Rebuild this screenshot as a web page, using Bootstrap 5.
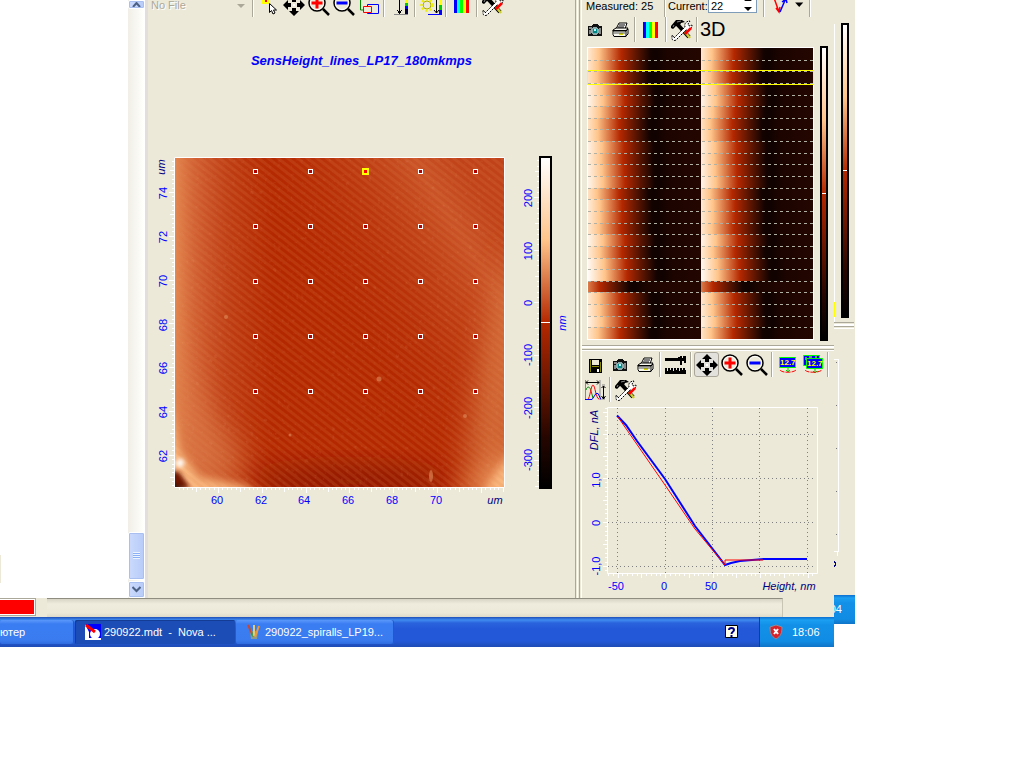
<!DOCTYPE html>
<html lang="en">
<head>
<meta charset="utf-8">
<meta name="viewport" content="width=device-width, initial-scale=1">
<title>Nova - 290922.mdt</title>
<link href="https://cdn.jsdelivr.net/npm/bootstrap@5.3.0/dist/css/bootstrap.min.css" rel="stylesheet">
<style>
:root{--face:#ece9d8;--edge:#aca899}
body{font-family:"Liberation Sans",Arial,sans-serif;font-size:11px;line-height:14px;background:#fff;color:#000}
.desktop{padding-right:169px}
.face{background:var(--face)}
.peek{width:21px}
.blank-pane{width:128px;background:#fff}
.blank-pane i{width:1px;height:28px;margin-bottom:15px;background:var(--face)}
.vscroll{width:20px;background:linear-gradient(90deg,#f0eee6,#fefefb 15px,#fff 17px,#e2dedb 17px)}
.vscroll button{width:17px;border:1px solid #fff;border-radius:2px;background:linear-gradient(90deg,#cbdafd,#b7cbf9);box-shadow:inset 0 0 0 1px #a9bff0;padding:0}
.up-btn{height:9px}.down-btn{height:17px}.thumb{height:48px;margin-bottom:1px}
.toolbar{height:25px}
.toolbar-cut{height:17px;overflow:hidden;align-items:flex-end}
.tool{width:25px;height:25px;flex:none;border:0;padding:0;background:none;line-height:0}
.tool svg{width:24px;height:24px}
.tool.on{border:1px solid #aaa69a;border-radius:3px;background:#e2e1dc}
.tool-3d{font-size:20px;line-height:25px;font-family:"Liberation Sans",Arial,sans-serif}
.rule{width:6px;height:25px;flex:none;background:linear-gradient(var(--edge),var(--edge)) 2px 0/1px 100% no-repeat,linear-gradient(#fff,#fff) 3px 0/1px 100% no-repeat}
.files{width:98px;border:0;background:none;color:#aca899;text-shadow:1px 1px #fff;appearance:none;padding:0 3px;height:24px;font-size:11px;opacity:1}
.files-wrap svg{right:1px;bottom:8px}
.plot-title{font-size:13px;line-height:16px;font-weight:700;font-style:italic;color:#00f;padding-top:36px;margin-bottom:81px}
.vsplit{width:7px;background:linear-gradient(90deg,#aca899 1px,#ece9d8 1px 2px,#fff 2px 3px,#ece9d8 3px 4px,#aca899 4px 5px,#ece9d8 5px 6px,#fff 6px)}
.hsplit{height:7px;background:linear-gradient(#aca899 1px,#fff 1px 3px,#ece9d8 3px 4px,#aca899 4px 5px,#fff 5px 6px,#ece9d8 6px)}
.right-pane{width:252px}
.count-box{width:49px;height:24px;border:1px solid #7f9db9;background:#fff}
.count-box input{width:32px;border:0;padding:0 2px;font-size:11px;background:none;height:12px}
.read{height:18px;line-height:14px}
.read-count{width:80px}
.read-current{width:40px}
.status{height:19px}
.status .alarm{width:36px;height:18px;background:#f00;border:1px solid #aca899;border-left:0;box-shadow:inset 0 -1px #fff,inset -1px 0 #fff,inset 0 1px #fff}
.status .well{margin-left:11px;margin-right:51px;border-top:1px solid #8f8c80;border-right:1px solid #c9c5b4;background:linear-gradient(#d8d5c6,#efecde 5px,#ece9d8 14px,#dedac9)}
.taskbar{height:30px;background:linear-gradient(#1f4fb8,#3f8cf0 3px,#2a62dc 6px,#2359d8 12px,#2359d8 24px,#1f4cb4);color:#fff}
.task{height:24px;border:0;border-radius:2px;background:linear-gradient(#5b98fa,#3a7df2 4px,#3a7cf0 20px,#2e6ce0);color:#fff;padding:0 10px;text-align:left;white-space:pre;overflow:hidden;font-size:11px;box-shadow:inset -1px 0 #2358c8;margin-right:1px}
.task svg{flex:none;margin-right:3px}
.task-a{width:74px;padding:0}.task-b{width:160px;background:#1c4db6;box-shadow:inset 1px 1px #153c94}.task-c{width:158px}
.tray{background:linear-gradient(#0d6fd0,#1ba0f2 3px,#1290e8 8px,#118ce4 24px,#0f74c8);color:#fff}
.tray-main{width:75px;height:30px;border-left:1px solid #0c3c98}
.tray-back{height:29px;line-height:28px;direction:rtl;overflow:hidden;padding-right:13px}
svg text{font-family:"Liberation Sans",Arial,sans-serif;font-size:11px}
svg .lcd{font-size:8px;fill:#ff0;font-weight:700}
.num{fill:#00f;text-anchor:middle}
.unit{fill:#000080;font-style:italic;text-anchor:middle}
</style>
</head>
<body>
<svg class="d-none" aria-hidden="true">
 <symbol id="move" viewBox="0 0 24 24"><path d="M12 1l5 5h-3v3h-4V6H7zM12 23l5-5h-3v-3h-4v3H7zM1 12l5-5v3h3v4H6v3zM23 12l-5-5v3h-3v4h3v3z"/><path d="M11 11h2v2h-2z" fill="#fff"/></symbol>
 <symbol id="lens" viewBox="0 0 24 24"><path d="M16 16l6 6" stroke="#000" stroke-width="2.500"/><circle cx="10" cy="10" r="8" fill="#ece9d8" stroke="#000" stroke-width="1.500"/><circle cx="10" cy="10" r="6.500" fill="none" stroke="#fff"/></symbol>
 <symbol id="zin" viewBox="0 0 24 24"><use href="#lens"/><path d="M10 4.500v11M4.500 10h11" stroke="#f00" stroke-width="3"/></symbol>
 <symbol id="zout" viewBox="0 0 24 24"><use href="#lens"/><path d="M4.500 10h11" stroke="#00f" stroke-width="3"/></symbol>
 <symbol id="spectrum" viewBox="0 0 24 24" shape-rendering="crispEdges"><path d="M4 4h3v16H4z" fill="#00f"/><path d="M7 4h3v16H7z" fill="#0ff"/><path d="M10 4h3v16h-3z" fill="#0f0"/><path d="M13 4h3v16h-3z" fill="#ff0"/><path d="M16 4h3v16h-3z" fill="#f00"/></symbol>
 <symbol id="tools" viewBox="0 0 24 24"><path d="M8 7l11 12" stroke="#000" stroke-width="4"/><path d="M15 14l5 6" stroke="#cc3" stroke-width="2.500"/><path d="M1 8l5-6h6l3 2-4 1-2 4-3-1-3 3-2-1z"/><path d="M7 4l4-1M3 9l1-2" stroke="#888"/><path d="M4 20L15 9c-1-3 1-6 5-6l-2 3 1 2 3-1c0 4-3 6-6 5L7 21c-1 2-4 2-5 0v-4l2 2z" fill="#fff" stroke="#000" stroke-dasharray="2 1"/><path d="M21 10l-6 6" stroke="#f00" stroke-width="2.500"/></symbol>
 <symbol id="camera" viewBox="0 0 24 24" shape-rendering="crispEdges"><path d="M5 8h3l2-2h4l2 2h3v10H5z" fill="#111"/><path d="M6 9h3v2H6zM16 10h2v6h-2zM6 12h2v4H6z" fill="#888"/><circle cx="12" cy="13" r="4" fill="#8aa"/><circle cx="12" cy="13" r="2.500" fill="#088"/><path d="M11 11h2v2h-2z" fill="#aff"/></symbol>
 <symbol id="printer" viewBox="0 0 24 24"><path d="M8 11l3-6h8l-2 6" fill="#fff" stroke="#000"/><path d="M11 7h6M10 9h6" stroke="#000"/><path d="M5 12l3-2h12l-2 3H5zM5 12.500h13v6H6l-1-2zM18 13l2-2v5l-2 2" fill="#f8f8f0" stroke="#000"/><path d="M11 16h4" stroke="#dd0" stroke-width="2"/><path d="M6 15h11" stroke="#555"/></symbol>
 <symbol id="save" viewBox="0 0 24 24" shape-rendering="crispEdges"><path d="M6 6h13v14H6z"/><path d="M7 7h1v12H7zM17 9h1v10h-1zM9 13h7v1H9z" fill="#880"/><path d="M9 7h7v5H9z" fill="#ece9d8"/><path d="M14 16h2v3h-2z" fill="#fff"/></symbol>
 <symbol id="caliper" viewBox="0 0 24 24" shape-rendering="crispEdges"><path d="M1 5h13V4h2V3h2v2h1V3h3v7h-2V8h-2v4h-2V8H1zM1 15h21v6H1z"/><path d="M3 15v3M6 15v2M9 15v3M12 15v2M15 15v3M18 15v2M21 15v2" stroke="#ece9d8"/></symbol>
 <symbol id="peaks" viewBox="0 0 24 24"><path d="M2.500 2v20M17 2v20M19 7h3M19 21h3" stroke="#888" fill="none"/><path d="M3 4.500h13M5 2.500l-2 2 2 2M14 2.500l2 2-2 2M20.500 8v13M18.500 10l2-2 2 2M18.500 18l2 3 2-3" stroke="#000" fill="none"/><path d="M3 12c1-4 4-4 5 1l2 7" stroke="#080" fill="none"/><path d="M5 21c2-1 3-14 5-14s3 14 6 14" stroke="#f00" fill="none"/><path d="M2 21.500h7l4-6h2l3 6" stroke="#00f" fill="none"/></symbol>
</svg>

<div class="desktop d-flex align-items-start">
 <main class="flex-grow-1 face">
  <div class="d-flex">
   <div class="blank-pane d-flex align-items-end"><i></i></div>
   <div class="vscroll d-flex flex-column align-items-start">
    <button class="up-btn" aria-label="Scroll up"><svg class="d-block mx-auto" width="9" height="5"><path d="M1 5l3.500-4L8 5" fill="none" stroke="#4d6185" stroke-width="2"/></svg></button>
    <button class="thumb mt-auto" aria-label="Scroll thumb"><svg class="d-block mx-auto" width="7" height="8"><path d="M0 .5h7M0 2.500h7M0 4.500h7M0 6.500h7" stroke="#eef4fe"/><path d="M0 1.500h7M0 3.500h7M0 5.500h7" stroke="#8cb0f8"/></svg></button>
    <button class="down-btn" aria-label="Scroll down"><svg class="d-block mx-auto" width="9" height="7"><path d="M.5 1l4 4 4-4" fill="none" stroke="#4d6185" stroke-width="2"/></svg></button>
   </div>
   <section class="flex-grow-1">
    <div class="toolbar toolbar-cut d-flex">
     <div class="files-wrap position-relative"><select class="files" aria-label="File" disabled><option>No File</option></select><svg class="position-absolute" width="8" height="5"><path d="M0 0h8L4 4z" fill="#aca899"/></svg></div>
     <span class="rule ms-1"></span>
     <button class="tool" aria-label="Pick"><svg viewBox="0 0 24 24"><path d="M5 7h7v4H5z" fill="#ff0"/><path d="M8 6h2v3H8z" fill="#f00"/><path d="M12.500 10.500v9l2-2 1.500 3.500 2-1-1.500-3h3z" fill="#fff" stroke="#000"/></svg></button>
     <button class="tool" aria-label="Move"><svg><use href="#move"/></svg></button>
     <button class="tool" aria-label="Zoom in"><svg><use href="#zin"/></svg></button>
     <button class="tool" aria-label="Zoom out"><svg><use href="#zout"/></svg></button>
     <button class="tool" aria-label="Arrange"><svg viewBox="0 0 24 24" fill="none"><path d="M3.500 4v13H6" stroke="#080"/><path d="M10.500 11.500h11v9h-11z" stroke="#00f"/><path d="M6.500 13.500h8v6h-8z" fill="#ece9d8" stroke="#f00"/></svg></button>
     <span class="rule"></span>
     <button class="tool" aria-label="Range"><svg viewBox="0 0 24 24" shape-rendering="crispEdges"><path d="M11.500 2v18M9 17l2.500 3 2.500-3" stroke="#000" fill="none"/><path d="M6 21.500h14" stroke="#888"/><path d="M17 2h3v8h-3z" fill="#ff0"/><path d="M17 10h3v3h-3z" fill="#0c0"/><path d="M17 13h3v3h-3z" fill="#00f"/><path d="M17 16h3v5h-3z" fill="#003"/></svg></button>
     <span class="rule"></span>
     <button class="tool" aria-label="Auto range"><svg viewBox="0 0 24 24"><circle cx="8" cy="12" r="4" fill="#ece9d8" stroke="#aa0"/><circle cx="8" cy="12" r="5.500" fill="none" stroke="#ee0" stroke-width="2.500" stroke-dasharray="2 2"/><path d="M17.500 3v17M15 17l2.500 3 2.500-3" stroke="#000" fill="none"/><path d="M20 3h3v9h-3z" fill="#ff0"/><path d="M20 12h3v5h-3z" fill="#0c0"/><path d="M20 17h3v5H9v-1h11z" fill="#00f"/></svg></button>
     <span class="rule"></span>
     <button class="tool" aria-label="Palette"><svg><use href="#spectrum"/></svg></button>
     <span class="rule"></span>
     <button class="tool" aria-label="Settings"><svg><use href="#tools"/></svg></button>
    </div>
    <h1 class="plot-title text-center">SensHeight_lines_LP17_180mkmps</h1>
    <svg class="d-block" width="427" height="360" viewBox="148 150 427 360" role="img" aria-label="Height map">
     <defs>
      <linearGradient id="bar" x2="0" y2="1"><stop offset="0" stop-color="#fff"/><stop offset=".25" stop-color="#ffc48a"/><stop offset=".5" stop-color="#b42800"/><stop offset=".85" stop-color="#260600"/><stop offset="1" stop-color="#000"/></linearGradient>
      <linearGradient id="gl"><stop offset="0" stop-color="#e68c54" stop-opacity=".95"/><stop offset=".06" stop-color="#dc7444" stop-opacity=".75"/><stop offset=".16" stop-color="#d06034" stop-opacity=".4"/><stop offset=".3" stop-color="#c84e20" stop-opacity="0"/></linearGradient>
      <linearGradient id="gr" gradientUnits="userSpaceOnUse" x1="330" y1="310" x2="490" y2="210"><stop offset="0" stop-color="#b42800" stop-opacity="0"/><stop offset=".8" stop-color="#d87040" stop-opacity=".6"/><stop offset="1" stop-color="#cc5c30" stop-opacity=".5"/></linearGradient>
      <pattern id="scan" width="6" height="6" patternUnits="userSpaceOnUse" patternTransform="rotate(38)"><path d="M0 1.500h6" stroke="#e08850" stroke-opacity=".16" stroke-width="3"/></pattern>
      <filter id="b3" x="-50%" y="-50%" width="200%" height="200%"><feGaussianBlur stdDeviation="4"/></filter>
      <filter id="b1" x="-50%" y="-50%" width="200%" height="200%"><feGaussianBlur stdDeviation="2"/></filter>
      <filter id="b9" x="-50%" y="-50%" width="200%" height="200%"><feGaussianBlur stdDeviation="14"/></filter>
      <filter id="grain"><feTurbulence baseFrequency=".22" numOctaves="2" seed="4"/><feColorMatrix values="0 0 0 0 1  0 0 0 0 .6  0 0 0 0 .35  0 0 0 1.400 -.55"/></filter>
      <clipPath id="area"><path d="M175 158h329v329H175z"/></clipPath>
     </defs>
     <path d="M174.500 157.500h330v330h-330z" fill="#b42800" stroke="#fff" stroke-width="1"/>
     <g clip-path="url(#area)">
      <path d="M175 158h329v329H175z" fill="url(#gl)"/><path d="M175 158h329v329H175z" fill="url(#gr)"/>
      <ellipse cx="350" cy="482" rx="100" ry="16" fill="#801400" opacity=".75" filter="url(#b9)"/>
      <path d="M175 320c10 50 25 90 65 125v42h-65z" fill="#dc7c48" opacity=".6" filter="url(#b9)"/>
      <path d="M520 240v260h-60c10-70 20-180 60-260z" fill="#e08850" opacity=".6" filter="url(#b9)"/>
      <path d="M170 400l9 50 20 27 45 8 20 10H165z" fill="#ffc48a" opacity=".85" filter="url(#b3)"/>
      <path d="M455 496c22-8 40-22 60-50v50z" fill="#ffb478" opacity=".8" filter="url(#b9)"/>
      <path d="M482 494l30-44v44z" fill="#ffc48a" opacity=".8" filter="url(#b3)"/>
      <path d="M175 158h329v329H175z" fill="url(#scan)"/>
      <path d="M175 158h329v329H175z" filter="url(#grain)" opacity=".16"/>
      <path d="M168 470l11 2 11 16h-22z" fill="#701400" filter="url(#b1)"/><path d="M172 484l14 5h-14z" filter="url(#b1)"/>
      <circle cx="180" cy="463" r="4" fill="#fff" filter="url(#b1)"/>
      <g fill="#e08c5c" opacity=".6"><circle cx="226" cy="317" r="2"/><circle cx="379" cy="379" r="2.500"/><circle cx="290" cy="435" r="1.500"/><circle cx="465" cy="416" r="2"/><ellipse cx="431" cy="476" rx="2" ry="6"/></g>
     </g>
     <g id="pins" shape-rendering="crispEdges"></g>
     <g id="mapticks" stroke="#fff" shape-rendering="crispEdges"></g>
     <g class="num"><text x="217" y="504">60</text><text x="261" y="504">62</text><text x="304" y="504">64</text><text x="348" y="504">66</text><text x="392" y="504">68</text><text x="436" y="504">70</text>
      <text transform="translate(167 193) rotate(-90)">74</text><text transform="translate(167 237) rotate(-90)">72</text><text transform="translate(167 281) rotate(-90)">70</text><text transform="translate(167 325) rotate(-90)">68</text><text transform="translate(167 368) rotate(-90)">66</text><text transform="translate(167 412) rotate(-90)">64</text><text transform="translate(167 456) rotate(-90)">62</text>
      <text transform="translate(532 198) rotate(-90)">200</text><text transform="translate(532 251) rotate(-90)">100</text><text transform="translate(532 303) rotate(-90)">0</text><text transform="translate(532 355) rotate(-90)">-100</text><text transform="translate(532 408) rotate(-90)">-200</text><text transform="translate(532 460) rotate(-90)">-300</text></g>
     <g class="unit"><text x="495" y="504">um</text><text transform="translate(165 167) rotate(-90)">um</text><text transform="translate(566 323) rotate(-90)" style="fill:#00f">nm</text></g>
     <path d="M539 156h13v333h-13z"/><path d="M541 158h9v329h-9z" fill="url(#bar)"/><path d="M541 322h9v1h-9z" fill="#fff"/>
    </svg>
   </section>
   <div class="vsplit"></div>
   <section class="right-pane flex-shrink-0">
    <div class="toolbar toolbar-cut d-flex">
     <span class="read read-count ps-1">Measured: 25</span><span class="rule"></span>
     <label class="read read-current" for="cur">Current:</label>
     <div class="count-box d-flex align-items-end mb-1"><input id="cur" type="text" value="22"><svg class="ms-auto me-1" width="8" height="14"><path d="M0 3h8L4 0zM0 9h8l-4 4z"/></svg></div>
     <span class="rule ms-1"></span>
     <button class="tool" aria-label="Curve direction"><svg viewBox="0 0 24 24" fill="none" stroke-width="1.500"><path d="M5 2l6 17M8 15l3 4 1-5" stroke="#f00"/><path d="M12 19l6-14M14 9l4-3 1 4" stroke="#00f"/></svg></button>
     <button class="tool" style="width:15px" aria-label="More"><svg viewBox="0 0 24 24" style="width:15px"><path d="M5 8h13l-6.500 7z"/></svg></button><span class="rule"></span>
    </div>
    <div class="toolbar d-flex">
     <button class="tool" aria-label="Snapshot"><svg><use href="#camera"/></svg></button>
     <button class="tool" aria-label="Print"><svg><use href="#printer"/></svg></button><span class="rule"></span>
     <button class="tool" aria-label="Palette"><svg><use href="#spectrum"/></svg></button><span class="rule"></span>
     <button class="tool" aria-label="Settings"><svg><use href="#tools"/></svg></button><span class="rule"></span>
     <button class="tool tool-3d">3D</button>
    </div>
    <svg class="d-block" width="252" height="303" viewBox="582 42 252 303" shape-rendering="crispEdges" role="img" aria-label="Force curves">
     <path d="M587 47h227v293H587z" fill="#fff"/><g id="heat"></g>
     <path d="M587 70h227v15H587zM588 71v13h225V71z" fill="#ff0" fill-rule="evenodd"/>
     <path d="M820 46h8v295h-8z"/><path d="M822 48h4v291h-4z" fill="url(#bar)"/><path d="M822 193h4v1h-4z" fill="#fff"/>
    </svg>
    <div class="hsplit"></div>
    <div class="toolbar d-flex">
     <button class="tool" aria-label="Save"><svg><use href="#save"/></svg></button>
     <button class="tool" aria-label="Snapshot"><svg><use href="#camera"/></svg></button>
     <button class="tool" aria-label="Print"><svg><use href="#printer"/></svg></button><span class="rule"></span>
     <button class="tool" aria-label="Measure"><svg><use href="#caliper"/></svg></button><span class="rule"></span>
     <button class="tool on" aria-label="Move"><svg><use href="#move"/></svg></button>
     <button class="tool" aria-label="Zoom in"><svg><use href="#zin"/></svg></button>
     <button class="tool" aria-label="Zoom out"><svg><use href="#zout"/></svg></button><span class="rule"></span>
     <button class="tool" aria-label="Value"><svg viewBox="0 0 24 24"><path d="M3.500 4.500h16v10h-16z" fill="#00f" stroke="#0f0"/><text class="lcd" x="4" y="12">12.7</text><path d="M12 15v4m-2-2l2 2 2-2" stroke="#0c0" fill="none"/><path d="M4 17c2 3 13 3 16 0" stroke="#f00" fill="none" stroke-dasharray="5 1"/></svg></button>
     <button class="tool" aria-label="Values"><svg viewBox="0 0 24 24"><path d="M2.500 2.500h16v10h-16z" fill="#00f" stroke="#0f0"/><path d="M5 4v3M8 4h3M14 4h2" stroke="#ff0"/><path d="M5.500 5.500h16v10h-16z" fill="#00f" stroke="#0f0"/><text class="lcd" x="6" y="13">12.7</text><path d="M14 16v4m-2-2l2 2 2-2" stroke="#0c0" fill="none"/><path d="M4 17c2 3 14 3 17 0" stroke="#f00" fill="none" stroke-dasharray="5 1"/></svg></button><span class="rule"></span>
    </div>
    <div class="toolbar d-flex">
     <button class="tool" aria-label="Axes"><svg><use href="#peaks"/></svg></button><span class="rule"></span>
     <button class="tool" aria-label="Settings"><svg><use href="#tools"/></svg></button>
    </div>
    <svg class="d-block" width="252" height="196" viewBox="582 402 252 196" role="img" aria-label="DFL against height">
     <path d="M607.500 407.500h210v166h-210z" fill="none" stroke="#fff"/>
     <path d="M617.500 408v165M665.500 408v165M712.500 408v165M759.500 408v165M807.500 408v165M608 434.500h208M608 478.500h208M608 522.500h208M608 566.500h208" stroke="#808080" stroke-dasharray="1 3" shape-rendering="crispEdges"/>
     <g id="curveticks" stroke="#fff" shape-rendering="crispEdges"></g>
     <path d="M617 415.500L626 425L637 441L665 479L695 526L725 565l6-2 9-2 24-2h43" fill="none" stroke="#00f" stroke-width="2"/>
     <path d="M618 417L665 485l30 44 30 36v-5h38" fill="none" stroke="#f00"/><path d="M763 559h44" stroke="#00f" stroke-width="2"/>
     <g class="num"><text x="616" y="590">-50</text><text x="664" y="590">0</text><text x="711" y="590">50</text><text transform="translate(600 480) rotate(-90)">1,0</text><text transform="translate(600 523) rotate(-90)">0</text><text transform="translate(600 566) rotate(-90)">-1,0</text></g>
     <g class="unit"><text x="789" y="590">Height, nm</text><text transform="translate(598 430) rotate(-90)">DFL, nA</text></g>
    </svg>
   </section>
  </div>
  <div class="status d-flex"><div class="alarm"></div><div class="well flex-grow-1"></div></div>
  <div class="taskbar d-flex align-items-center">
   <button class="task task-a">ютер</button>
   <button class="task task-b d-flex align-items-center"><svg width="16" height="16"><path d="M0 0h16v16H0z" fill="#00f"/><path d="M0 0l4 8v8H0zM4 14h12v2H4z" fill="#fff"/><circle cx="10" cy="10" r="5" fill="#fff"/><path d="M1 1l9 7" stroke="#f00" stroke-width="3"/></svg>290922.mdt  -  Nova ...</button>
   <button class="task task-c d-flex align-items-center"><svg width="16" height="16"><path d="M4 7h8l-1 8H5z" fill="#8a9a8c"/><path d="M2 1l5 11" stroke="#c43" stroke-width="2"/><path d="M8 1v11" stroke="#dc8" stroke-width="2"/><path d="M13 2L9 13" stroke="#e93" stroke-width="2"/><path d="M5 4l2 9" stroke="#3a5"/></svg>290922_spiralls_LP19...</button>
   <button class="border-0 bg-transparent p-0 ms-auto me-3" aria-label="Help"><svg class="d-block" width="14" height="14"><path d="M.5.5h12v12H.5z" fill="#ffffe8" stroke="#000"/><path d="M4 5q0-2 2.500-2T9 5c0 2-2.500 1.500-2.500 4M6.500 10v2" fill="none" stroke="#008" stroke-width="2"/></svg></button>
   <div class="tray tray-main d-flex align-items-center gap-2 ps-2 ms-1"><svg width="16" height="16"><path d="M8 1l6 2c0 6-1 9-6 12C3 12 2 9 2 3z" fill="#d8232a" stroke="#8c8c98"/><path d="M6 5l4 5M10 5l-4 5" stroke="#fff" stroke-width="2"/></svg><span>18:06</span></div>
  </div>
 </main>
 <aside class="peek face flex-shrink-0">
  <svg class="d-block" width="21" height="595" viewBox="834 0 21 595" shape-rendering="crispEdges">
   <path d="M834 24h1v298h-1zM834 324h20v2h-20zM834 328h20v1h-20zM834 359h5v193h-1V360h-4zM834 551h5v1h-5zM837 552h1v4h-1z" fill="#fff"/><path d="M834 322h20v1h-20zM834 326h20v1h-20z" fill="#aca899"/>
   <path d="M834 302h1v15h-1z" fill="#ff0"/><path d="M841 23h8v295h-8z"/><path d="M843 25h4v291h-4z" fill="url(#bar)"/><path d="M843 170h4v1h-4z" fill="#fff"/>
   <path d="M836 362h1v1h-1zM836 405h1v1h-1zM836 448h1v1h-1zM836 491h1v1h-1zM836 534h1v1h-1z" fill="#777"/><path d="M834 561l2 3-2 3" stroke="#000080" fill="none"/>
  </svg>
  <div class="tray tray-back">04</div>
 </aside>
</div>

<script>
// Markers of the 5 x 5 measuring grid; the current point is yellow.
let s='';
for(let r=0;r<5;r++)for(let c=0;c<5;c++){
  const on=r===0&&c===2,k=on?3:2,x=255+55*c,y=171+55*r;
  s+=`<rect x="${x-k}" y="${y-k}" width="${2*k+1}" height="${2*k+1}" fill="${on?'#ff0':'#fff'}"/><rect x="${x-1}" y="${y-1}" width="3" height="3" fill="${on?'#f00':'#b00000'}"/>`;
}
pins.innerHTML=s;
// Ticks: every tenth is a labelled division, every fifth is half of one.
function ticks(edge,base,step,from,to,vertical,dir,len=[5,4,2]){
  let d='';
  for(let i=-80;i<=80;i++){
    const p=Math.round(base+step*i)+.5;
    if(p<from||p>to)continue;
    const l=dir*(i%10===0?len[0]:i%5===0?len[1]:len[2]);
    d+=vertical?`M${edge} ${p}h${l}`:`M${p} ${edge}v${l}`;
  }
  return `<path d="${d}"/>`;
}
mapticks.innerHTML=ticks(174,192,4.38,158,487,true,-1)+ticks(488,218,4.38,175,504,false,1)+ticks(539,302,5.25,158,488,true,-1);
curveticks.innerHTML=ticks(607,522,4.4,408,573,true,-1,[4,4,2])+ticks(574,665,4.75,608,817,false,1,[4,4,2]);
// Force curves, one row for each measured point; shift moves the contact edge.
const shift=[-1,-2,-3,2,3,0,-3,-2,2,1,2,3,-3,0,0,-1,3,0,4,5,-22,-1,0,2,-2];
const stops=[[-6,'#fff'],[12,'#ffc48a'],[34,'#b42800'],[50,'#5a1400'],[64,'#120200'],[70,'#100200'],[80,'#1c0400'],[113,'#240600']];
s='';
shift.forEach((v,i)=>{
  const y=Math.round(48+11.64*i),y2=Math.round(48+11.64*(i+1));
  [588,701].forEach((x,h)=>{
    s+=`<linearGradient id="r${i}_${h}" gradientUnits="userSpaceOnUse" x1="${x-20+v}" x2="${x+113+v}" y1="0" y2="0">`+stops.map(p=>`<stop offset="${(p[0]+20)/133}" stop-color="${p[1]}"/>`).join('')+`</linearGradient><rect x="${x}" y="${y}" width="${h?112:113}" height="${y2-y}" fill="url(#r${i}_${h})"/>`;
  });
  if(i)s+=`<path d="M588 ${y}.5h225" stroke="#b0b0a4" stroke-dasharray="3 3"/>`;
});
heat.innerHTML=s;
</script>
<script src="https://cdn.jsdelivr.net/npm/bootstrap@5.3.0/dist/js/bootstrap.bundle.min.js"></script>
</body>
</html>
